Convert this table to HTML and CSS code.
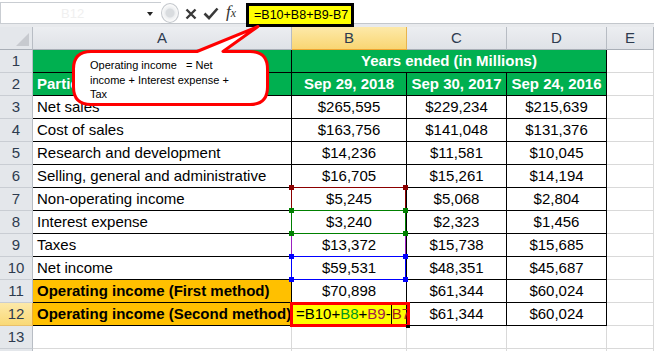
FILE: index.html
```html
<!DOCTYPE html>
<html>
<head>
<meta charset="utf-8">
<link rel="stylesheet" href="styles.css">
</head>
<body>
<div class="app">
  <div class="fbar">
    <div class="namebox"><span class="nb-text">B12</span><span class="nb-arrow"></span></div>
    <div class="knob"></div>
    <svg class="bx" width="12" height="12" viewBox="0 0 12 12"><path d="M1.5 1.5 L10.5 10.5 M10.5 1.5 L1.5 10.5" stroke="#3a3a3a" stroke-width="2.4" fill="none"/></svg>
    <svg class="bc" width="16" height="13" viewBox="0 0 16 13"><path d="M1.5 6.5 L6 11 L14.5 1.5" stroke="#3a3a3a" stroke-width="2.6" fill="none"/></svg>
    <span class="fx">f<small>x</small></span>
    <div class="finput"><span class="fhl">=B10+B8+B9-B7</span></div>
  </div>

  <div class="sheet">
    <div class="corner"><span class="tri"></span></div>
    <div class="ch">A</div><div class="ch sel">B</div><div class="ch">C</div><div class="ch">D</div><div class="ch">E</div>

    <div class="rh">1</div><div class="c b g"></div><div class="c b g ctr span3">Years ended (in Millions)</div><div class="c"></div>

    <div class="rh">2</div><div class="c b g">Particulars</div><div class="c b g ctr">Sep 29, 2018</div><div class="c b g ctr">Sep 30, 2017</div><div class="c b g ctr">Sep 24, 2016</div><div class="c"></div>

    <div class="rh">3</div><div class="c b">Net sales</div><div class="c b ctr">$265,595</div><div class="c b ctr">$229,234</div><div class="c b ctr">$215,639</div><div class="c"></div>

    <div class="rh">4</div><div class="c b">Cost of sales</div><div class="c b ctr">$163,756</div><div class="c b ctr">$141,048</div><div class="c b ctr">$131,376</div><div class="c"></div>

    <div class="rh">5</div><div class="c b">Research and development</div><div class="c b ctr">$14,236</div><div class="c b ctr">$11,581</div><div class="c b ctr">$10,045</div><div class="c"></div>

    <div class="rh">6</div><div class="c b">Selling, general and administrative</div><div class="c b ctr">$16,705</div><div class="c b ctr">$15,261</div><div class="c b ctr">$14,194</div><div class="c"></div>

    <div class="rh">7</div><div class="c b">Non-operating income</div><div class="c b ctr">$5,245<div class="rng r7"><i class="h tl"></i><i class="h tr"></i><i class="h bl"></i><i class="h br"></i></div></div><div class="c b ctr">$5,068</div><div class="c b ctr">$2,804</div><div class="c"></div>

    <div class="rh">8</div><div class="c b">Interest expense</div><div class="c b ctr">$3,240<div class="rng r8"><i class="h tl"></i><i class="h tr"></i><i class="h bl"></i><i class="h br"></i></div></div><div class="c b ctr">$2,323</div><div class="c b ctr">$1,456</div><div class="c"></div>

    <div class="rh">9</div><div class="c b">Taxes</div><div class="c b ctr">$13,372<div class="rng r9"><i class="h tl"></i><i class="h tr"></i><i class="h bl"></i><i class="h br"></i></div></div><div class="c b ctr">$15,738</div><div class="c b ctr">$15,685</div><div class="c"></div>

    <div class="rh">10</div><div class="c b">Net income</div><div class="c b ctr">$59,531<div class="rng r10"><i class="h tl"></i><i class="h tr"></i><i class="h bl"></i><i class="h br"></i></div></div><div class="c b ctr">$48,351</div><div class="c b ctr">$45,687</div><div class="c"></div>

    <div class="rh">11</div><div class="c b o">Operating income (First method)</div><div class="c b ctr">$70,898</div><div class="c b ctr">$61,344</div><div class="c b ctr">$60,024</div><div class="c"></div>

    <div class="rh sel">12</div><div class="c b o">Operating income (Second method)</div><div class="c b y"><span class="k">=B10+</span><span class="gr">B8</span><span class="k">+</span><span class="pu">B9</span><span class="k">-</span><span class="cur"></span><span class="mr">B7</span><div class="act"></div><div class="fill"></div></div><div class="c b ctr">$61,344</div><div class="c b ctr">$60,024</div><div class="c"></div>

    <div class="rh">13</div><div class="c"></div><div class="c"></div><div class="c"></div><div class="c"></div><div class="c"></div>
    <div class="rh"></div><div class="c"></div><div class="c"></div><div class="c"></div><div class="c"></div><div class="c"></div>
  </div>

  <div class="callout">
    <svg class="bubble" width="200" height="86" viewBox="0 0 200 86"><path d="M19 27.5 L125 27.5 L186 2.5 L151 27.5 L178 27.5 Q195.5 27.5 195.5 45 L195.5 63 Q195.5 80.5 178 80.5 L19 80.5 Q1.5 80.5 1.5 63 L1.5 45 Q1.5 27.5 19 27.5 Z" fill="#fff" stroke="#ff0000" stroke-width="3" stroke-linejoin="round"/></svg>
    <div class="ctext">Operating income &nbsp;&nbsp;= Net<br>income + Interest expense +<br>Tax</div>
  </div>
</div>
</body>
</html>
```

FILE: styles.css
```css
html, body {
  margin: 0;
  padding: 0;
  background: #fff;
}
body {
  width: 654px;
  height: 351px;
  overflow: hidden;
  font-family: "Liberation Sans", Arial, sans-serif;
}
.app {
  position: relative;
  width: 654px;
  height: 351px;
  overflow: hidden;
}

/* formula bar */
.fbar {
  height: 27px;
  display: flex;
  align-items: flex-start;
  background: linear-gradient(#fff 0 23px, #c3c7cc 23px 24px, #e8eaed 24px 27px);
}
.namebox {
  box-sizing: border-box;
  position: relative;
  width: 161px;
  height: 22px;
  margin-top: 2px;
  border: 1px solid #c9cdd2;
  border-right: none;
  background: #fff;
}
.nb-text {
  position: absolute;
  left: 60px;
  top: 3px;
  font-size: 13px;
  color: #f0f0f0;
}
.nb-arrow {
  position: absolute;
  right: 8px;
  top: 9px;
  width: 0;
  height: 0;
  border-left: 3.5px solid transparent;
  border-right: 3.5px solid transparent;
  border-top: 4px solid #222;
}
.knob {
  box-sizing: border-box;
  width: 18px;
  height: 20px;
  margin-top: 3px;
  border: 1px solid #c4c8cd;
  border-radius: 50%;
  background: radial-gradient(circle at 50% 50%, #d9dcdf 0 4px, #eceef0 5px, #fafafa 8px);
}
.bx {
  margin-left: 6px;
  margin-top: 8px;
}
.bc {
  margin-left: 6px;
  margin-top: 7px;
}
.fx {
  display: inline-block;
  width: 18px;
  margin-left: 7px;
  margin-top: 2px;
  font-family: "Liberation Serif", serif;
  font-style: italic;
  font-size: 17px;
  color: #333;
}
.fx small {
  font-size: 12px;
}
.finput {
  flex: 1;
  display: flex;
  padding-left: 2px;
}
.fhl {
  box-sizing: border-box;
  height: 24px;
  width: 108px;
  margin-top: 3px;
  border: 3px solid #000;
  background: #ffff00;
  padding: 0 0 0 5px;
  font-size: 12.5px;
  line-height: 18px;
  color: #000;
}

/* sheet */
.sheet {
  display: grid;
  grid-template-columns: 33px 259px 115px 100px 100px 47px;
  grid-auto-rows: 23px;
}
.corner {
  position: relative;
  box-sizing: border-box;
  background: #e4e7eb;
  border-right: 1px solid #b8bdc4;
  border-bottom: 1px solid #a9afb7;
}
.tri {
  position: absolute;
  right: 3px;
  bottom: 3px;
  width: 0;
  height: 0;
  border-left: 13px solid transparent;
  border-bottom: 13px solid #c7cacf;
}
.ch {
  box-sizing: border-box;
  background: linear-gradient(#eceef1, #dfe2e7);
  border-right: 1px solid #b7bcc3;
  border-bottom: 1px solid #a9afb7;
  text-align: center;
  font-size: 15px;
  line-height: 22px;
  color: #2d3b4f;
}
.ch.sel {
  background: linear-gradient(#fde9a9, #f9d673);
  border-right-color: #e8b44d;
  border-bottom-color: #eda532;
}
.rh {
  box-sizing: border-box;
  background: #e4e7eb;
  border-right: 1px solid #b8bdc4;
  border-bottom: 1px solid #c9cdd3;
  text-align: center;
  font-size: 15px;
  line-height: 22px;
  color: #2d3b4f;
}
.rh.sel {
  background: linear-gradient(#fde9a9, #f9d977);
  border-right-color: #e9ad3c;
  border-bottom-color: #e9c06a;
}
.c {
  position: relative;
  box-sizing: border-box;
  border-right: 1px solid #d9d9d9;
  border-bottom: 1px solid #d9d9d9;
  padding: 0 0 0 4px;
  font-size: 15px;
  line-height: 22px;
  color: #000;
  white-space: nowrap;
  background: #fff;
}
.c.b {
  border-right-color: #000;
  border-bottom-color: #000;
}
.c.ctr {
  text-align: center;
  padding: 0;
}
.c.g {
  background: #00b050;
  color: #fff;
  font-weight: bold;
}
.c.o {
  background: #ffc000;
  font-weight: bold;
}
.c.y {
  background: #ffff00;
  padding-left: 4px;
}
.span3 {
  grid-column: span 3;
}

/* formula colours */
.k { color: #000; }
.gr { color: #00961e; }
.pu { color: #a0204a; }
.mr { color: #a81c1c; }
.cur {
  display: inline-block;
  width: 1px;
  height: 22px;
  background: #000;
  vertical-align: top;
}

/* range highlight boxes */
.rng {
  position: absolute;
  left: -1px;
  top: -1px;
  right: 0;
  bottom: -1px;
  border: 1px solid;
  z-index: 1;
}
.r7 { border-color: #8b0000; color: #8b0000; }
.r8 { border-color: #008000; color: #008000; z-index: 2; }
.r9 { border-color: #9b1fc2; color: #9b1fc2; border-top-color: transparent; }
.r10 { border-color: #0000ff; color: #0000ff; z-index: 2; }
.h {
  position: absolute;
  width: 5px;
  height: 5px;
  background: currentColor;
}
.h.tl { left: -3px; top: -3px; }
.h.tr { right: -3px; top: -3px; }
.h.bl { left: -3px; bottom: -3px; }
.h.br { right: -3px; bottom: -3px; }

.act {
  position: absolute;
  left: -2px;
  top: -1px;
  right: -4px;
  bottom: -2px;
  border: 3px solid #ff0000;
  z-index: 3;
}
.fill {
  position: absolute;
  right: -4px;
  bottom: -3px;
  width: 4px;
  height: 3px;
  background: #000;
  z-index: 4;
}

/* callout */
.callout {
  position: absolute;
  left: 72px;
  top: 24px;
  width: 200px;
  height: 86px;
  z-index: 10;
}
.bubble {
  position: absolute;
  left: 0;
  top: 0;
}
.ctext {
  position: absolute;
  left: 18px;
  top: 34px;
  font-size: 11px;
  line-height: 14.5px;
  color: #000;
  white-space: nowrap;
}
```
